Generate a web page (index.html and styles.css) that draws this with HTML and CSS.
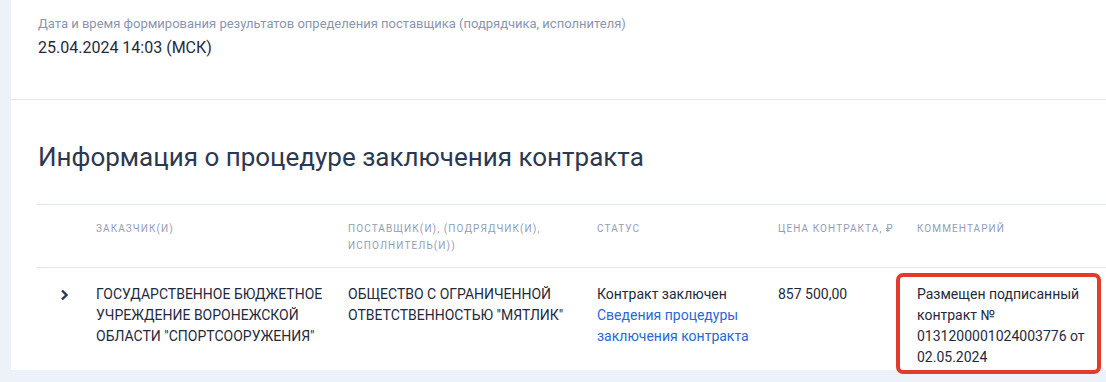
FILE: index.html
```html
<!DOCTYPE html>
<html lang="ru">
<head>
<meta charset="utf-8">
<title>Информация о процедуре заключения контракта</title>
<link rel="stylesheet" href="styles.css">
</head>
<body>
<main class="panel">
  <section class="summary">
    <div class="summary-label">Дата и время формирования результатов определения поставщика (подрядчика, исполнителя)</div>
    <div class="summary-value">25.04.2024 14:03 (МСК)</div>
  </section>
  <section class="contract">
    <h2 class="contract-title">Информация о процедуре заключения контракта</h2>
    <div class="table">
      <div class="row row-head">
        <div class="cell"></div>
        <div class="cell">Заказчик(и)</div>
        <div class="cell">Поставщик(и), (подрядчик(и), исполнитель(и))</div>
        <div class="cell">Статус</div>
        <div class="cell">Цена контракта, ₽</div>
        <div class="cell">Комментарий</div>
      </div>
      <div class="row row-body">
        <div class="cell cell-toggle">
          <svg class="chevron" width="9" height="12" viewBox="0 0 9 12" aria-hidden="true">
            <path d="M2 1.5 L6.5 6 L2 10.5" fill="none" stroke="#2d384c" stroke-width="2.4"/>
          </svg>
        </div>
        <div class="cell">ГОСУДАРСТВЕННОЕ БЮДЖЕТНОЕ УЧРЕЖДЕНИЕ ВОРОНЕЖСКОЙ ОБЛАСТИ "СПОРТСООРУЖЕНИЯ"</div>
        <div class="cell">ОБЩЕСТВО С ОГРАНИЧЕННОЙ ОТВЕТСТВЕННОСТЬЮ "МЯТЛИК"</div>
        <div class="cell">Контракт заключен<br><a class="link" href="#">Сведения процедуры заключения контракта</a></div>
        <div class="cell">857 500,00</div>
        <div class="cell cell-comment">
          <span class="comment-text">Размещен подписанный контракт № 0131200001024003776 от 02.05.2024</span>
          <span class="highlight"></span>
        </div>
      </div>
    </div>
  </section>
</main>
</body>
</html>
```

FILE: styles.css
```css
* {
  box-sizing: border-box;
}

html, body {
  margin: 0;
  padding: 0;
}

body {
  background: #edf1f8;
  font-family: Roboto, "Noto Sans", Arial, sans-serif;
  color: #1f2a3d;
  height: 382px;
  overflow: hidden;
}

.panel {
  margin-left: 11px;
  background: #ffffff;
}

.summary {
  padding: 15px 0 0 27px;
  height: 100px;
  border-bottom: 1px solid #e3e6ee;
}

.summary-label {
  font-size: 13px;
  line-height: 18px;
  color: #8a96b0;
}

.summary-value {
  margin-top: 5px;
  font-size: 16px;
  line-height: 20px;
  color: #1f2a3d;
}

.contract {
  padding: 0 0 0 25px;
}

.contract-title {
  margin: 0;
  padding: 41px 0 0 2px;
  height: 104px;
  font-size: 26px;
  line-height: 32px;
  font-weight: 400;
  color: #2c3850;
}

.table {
  border-top: 1px solid #e3e6ee;
}

.row {
  display: grid;
  grid-template-columns: 60px 252px 249px 181px 139px 1fr;
}

.row-head {
  padding: 15px 0 13px;
  border-bottom: 1px solid #e3e6ee;
  font-size: 10px;
  line-height: 17px;
  letter-spacing: 1.1px;
  text-transform: uppercase;
  color: #939db5;
}

.row-head .cell {
  padding-right: 8px;
}

.row-body {
  padding: 16px 0 2px;
  font-size: 14px;
  line-height: 21px;
  color: #1f2a3d;
}

.row-body .cell {
  padding-right: 14px;
}

.cell-toggle {
  display: flex;
  justify-content: flex-start;
  padding-left: 24px;
  padding-top: 5px;
}

.chevron {
  display: block;
}

.link {
  color: #2a68d8;
  text-decoration: none;
}

.cell-comment {
  position: relative;
}

.comment-text {
  display: block;
  max-width: 172px;
}

.highlight {
  position: absolute;
  left: -21px;
  top: -11px;
  right: 5px;
  bottom: -6px;
  border: 4px solid #e23a2d;
  border-radius: 7px;
  pointer-events: none;
}
```
